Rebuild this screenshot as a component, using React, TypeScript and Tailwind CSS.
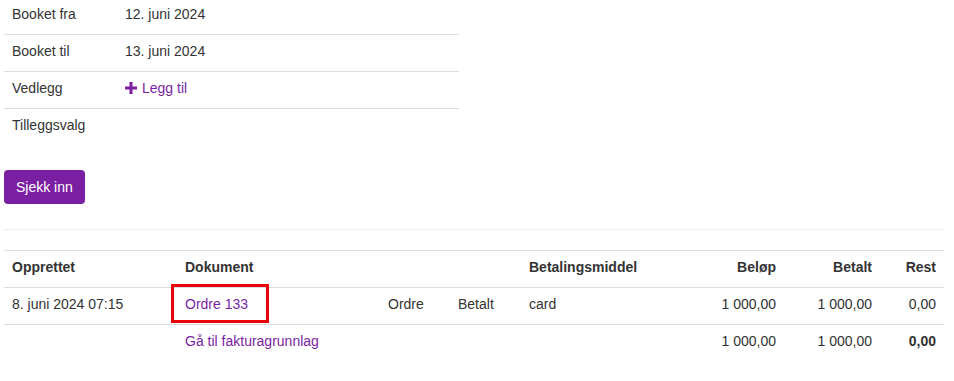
import React from 'react';

const cols = 'grid grid-cols-[173px_203px_70px_71px_139px_124px_96px_64px]';

const Plus = () => (
  <svg width="12" height="12" viewBox="0 0 12 12" className="inline-block mr-[5px] -mt-[2px]">
    <rect x="0" y="4.5" width="12" height="3" fill="#7b1fa2" />
    <rect x="4.5" y="0" width="3" height="12" fill="#7b1fa2" />
  </svg>
);

export default function App() {
  const info = [
    { label: 'Booket fra', value: '12. juni 2024' },
    { label: 'Booket til', value: '13. juni 2024' },
  ];

  return (
    <div className="w-[954px] h-[381px] bg-white text-[#333] text-[14px] leading-[20px] px-[4px] overflow-hidden font-['Liberation_Sans',Arial,sans-serif]">
      {/* Booking details */}
      <div className="w-[455px]">
        {info.map((row, i) => (
          <div
            key={row.label}
            className={`flex border-b border-[#ddd] ${i === 0 ? 'h-[35px] pt-[4px]' : 'h-[37px] pt-[6px]'}`}
          >
            <div className="w-[121px] pl-[8px]">{row.label}</div>
            <div>{row.value}</div>
          </div>
        ))}
        <div className="flex border-b border-[#ddd] h-[37px] pt-[6px]">
          <div className="w-[121px] pl-[8px]">Vedlegg</div>
          <a className="text-[#7b1fa2] cursor-pointer">
            <Plus />
            Legg til
          </a>
        </div>
        <div className="flex h-[36px] pt-[6px]">
          <div className="w-[121px] pl-[8px]">Tilleggsvalg</div>
        </div>
      </div>

      <button className="mt-[25px] h-[34px] px-[12px] rounded-[4px] bg-[#7b1fa2] text-white">Sjekk inn</button>

      <div className="mt-[25px] border-t border-[#eee] w-[940px]" />

      {/* Payments */}
      <div className="mt-[20px] w-[940px] border-t border-[#ddd] whitespace-nowrap">
        <div className={`${cols} h-[37px] pt-[6px] border-b border-[#ddd] font-bold`}>
          <div className="px-[8px]">Opprettet</div>
          <div className="px-[8px]">Dokument</div>
          <div className="px-[8px]" />
          <div className="px-[8px]" />
          <div className="px-[8px]">Betalingsmiddel</div>
          <div className="px-[8px] text-right">Beløp</div>
          <div className="px-[8px] text-right">Betalt</div>
          <div className="px-[8px] text-right">Rest</div>
        </div>
        <div className={`${cols} h-[37px] pt-[6px] border-b border-[#ddd]`}>
          <div className="px-[8px]">8. juni 2024 07:15</div>
          <div className="px-[8px] relative">
            <a className="text-[#7b1fa2] cursor-pointer">Ordre 133</a>
            <div className="absolute left-[-6px] top-[-10px] w-[98px] h-[39px] border-[3px] border-[#e8000b]" />
          </div>
          <div className="px-[8px]">Ordre</div>
          <div className="px-[8px]">Betalt</div>
          <div className="px-[8px]">card</div>
          <div className="px-[8px] text-right">1 000,00</div>
          <div className="px-[8px] text-right">1 000,00</div>
          <div className="px-[8px] text-right">0,00</div>
        </div>
        <div className={`${cols} h-[37px] pt-[6px]`}>
          <div className="px-[8px]" />
          <div className="px-[8px]">
            <a className="text-[#7b1fa2] cursor-pointer">Gå til fakturagrunnlag</a>
          </div>
          <div className="px-[8px]" />
          <div className="px-[8px]" />
          <div className="px-[8px]" />
          <div className="px-[8px] text-right">1 000,00</div>
          <div className="px-[8px] text-right">1 000,00</div>
          <div className="px-[8px] text-right font-bold">0,00</div>
        </div>
      </div>
    </div>
  );
}
